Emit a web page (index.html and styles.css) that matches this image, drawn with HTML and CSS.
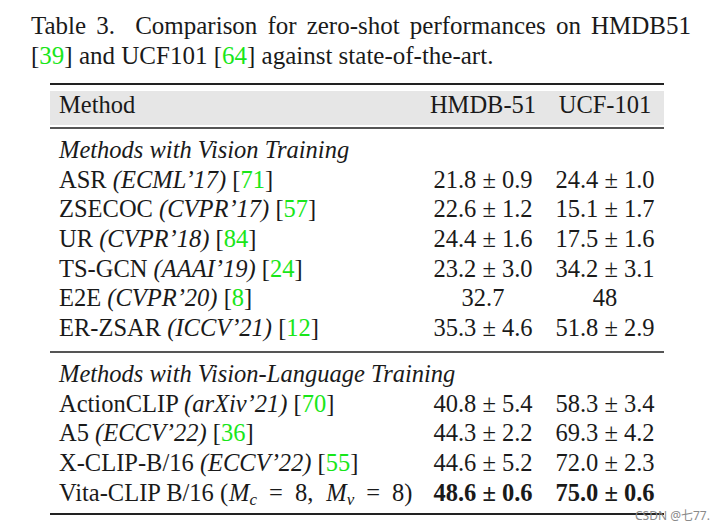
FILE: index.html
```html
<!DOCTYPE html>
<html lang="en">
<head>
<meta charset="utf-8">
<title>Table 3</title>
<link rel="stylesheet" href="styles.css">
</head>
<body>
<div class="page">
  <p class="caption">Table 3.&nbsp; Comparison for zero-shot performances on HMDB51 [<span class="ref">39</span>] and UCF101 [<span class="ref">64</span>] against state-of-the-art.</p>
  <div class="table">
    <div class="rule thick"></div>
    <div class="row head">
      <div class="c1">Method</div>
      <div class="num">HMDB-51</div>
      <div class="num">UCF-101</div>
    </div>
    <div class="rule thin"></div>
    <div class="section">
      <div class="row"><div class="c1 group">Methods with Vision Training</div></div>
      <div class="row"><div class="c1">ASR <i>(ECML’17)</i> [<span class="ref">71</span>]</div><div class="num">21.8 ± 0.9</div><div class="num">24.4 ± 1.0</div></div>
      <div class="row"><div class="c1">ZSECOC <i>(CVPR’17)</i> [<span class="ref">57</span>]</div><div class="num">22.6 ± 1.2</div><div class="num">15.1 ± 1.7</div></div>
      <div class="row"><div class="c1">UR <i>(CVPR’18)</i> [<span class="ref">84</span>]</div><div class="num">24.4 ± 1.6</div><div class="num">17.5 ± 1.6</div></div>
      <div class="row"><div class="c1">TS-GCN <i>(AAAI’19)</i> [<span class="ref">24</span>]</div><div class="num">23.2 ± 3.0</div><div class="num">34.2 ± 3.1</div></div>
      <div class="row"><div class="c1">E2E <i>(CVPR’20)</i> [<span class="ref">8</span>]</div><div class="num">32.7</div><div class="num">48</div></div>
      <div class="row"><div class="c1">ER-ZSAR <i>(ICCV’21)</i> [<span class="ref">12</span>]</div><div class="num">35.3 ± 4.6</div><div class="num">51.8 ± 2.9</div></div>
    </div>
    <div class="rule thin gap"></div>
    <div class="section">
      <div class="row"><div class="c1 group">Methods with Vision-Language Training</div></div>
      <div class="row"><div class="c1">ActionCLIP <i>(arXiv’21)</i> [<span class="ref">70</span>]</div><div class="num">40.8 ± 5.4</div><div class="num">58.3 ± 3.4</div></div>
      <div class="row"><div class="c1">A5 <i>(ECCV’22)</i> [<span class="ref">36</span>]</div><div class="num">44.3 ± 2.2</div><div class="num">69.3 ± 4.2</div></div>
      <div class="row"><div class="c1">X-CLIP-B/16 <i>(ECCV’22)</i> [<span class="ref">55</span>]</div><div class="num">44.6 ± 5.2</div><div class="num">72.0 ± 2.3</div></div>
      <div class="row"><div class="c1">Vita-CLIP B/16 (<i class="mv">M</i><sub><i>c</i></sub><span class="op">=</span>8,<span class="comma"></span><i class="mv">M</i><sub><i>v</i></sub><span class="op">=</span>8)</div><div class="num best">48.6 ± 0.6</div><div class="num best">75.0 ± 0.6</div></div>
    </div>
    <div class="rule thick bottom"></div>
  </div>
  <span class="watermark">CSDN @七77.</span>
</div>
</body>
</html>
```
FILE: styles.css
```css
html, body {
  margin: 0;
  padding: 0;
  background: #ffffff;
}

.page {
  position: relative;
  width: 719px;
  height: 529px;
  overflow: hidden;
  font-family: "Liberation Serif", "Times New Roman", serif;
  color: #1a1a1a;
}

.caption {
  margin: 11px 0 0 31px;
  width: 660px;
  font-size: 25px;
  line-height: 30px;
  text-align: justify;
}

.ref {
  color: #19e619;
}

.table {
  margin: 12px 0 0 50px;
  width: 614px;
  font-size: 24.5px;
}

.rule {
  background: #222222;
}

.rule.thick {
  height: 2px;
}

.rule.thin {
  height: 2px;
  margin-top: 2px;
  background: #555555;
}

.rule.gap {
  margin-top: 8px;
}

.rule.bottom {
  margin-top: 6px;
}

.row {
  display: grid;
  grid-template-columns: 1fr 112px 112px;
  column-gap: 10px;
  padding: 0 3px 0 9px;
  height: 29.7px;
  line-height: 29.7px;
  white-space: nowrap;
}

.row.head {
  margin-top: 6px;
  height: 34px;
  line-height: 28px;
  box-sizing: border-box;
  padding-bottom: 6px;
  background: #e6e6e6;
}

.section {
  padding-top: 6px;
}

.num {
  text-align: center;
}

.best {
  font-weight: bold;
}

.group {
  font-style: italic;
}

.mv {
  padding-left: 1px;
}

.op {
  display: inline-block;
  margin: 0 12px;
}

.comma {
  display: inline-block;
  width: 12px;
}

sub {
  font-size: 17px;
  line-height: 0;
  vertical-align: -4px;
}

.watermark {
  position: absolute;
  left: 635px;
  top: 506px;
  font-family: "Noto Sans", "Noto Sans CJK SC", sans-serif;
  font-size: 12px;
  color: #8a8a8a;
}
```
